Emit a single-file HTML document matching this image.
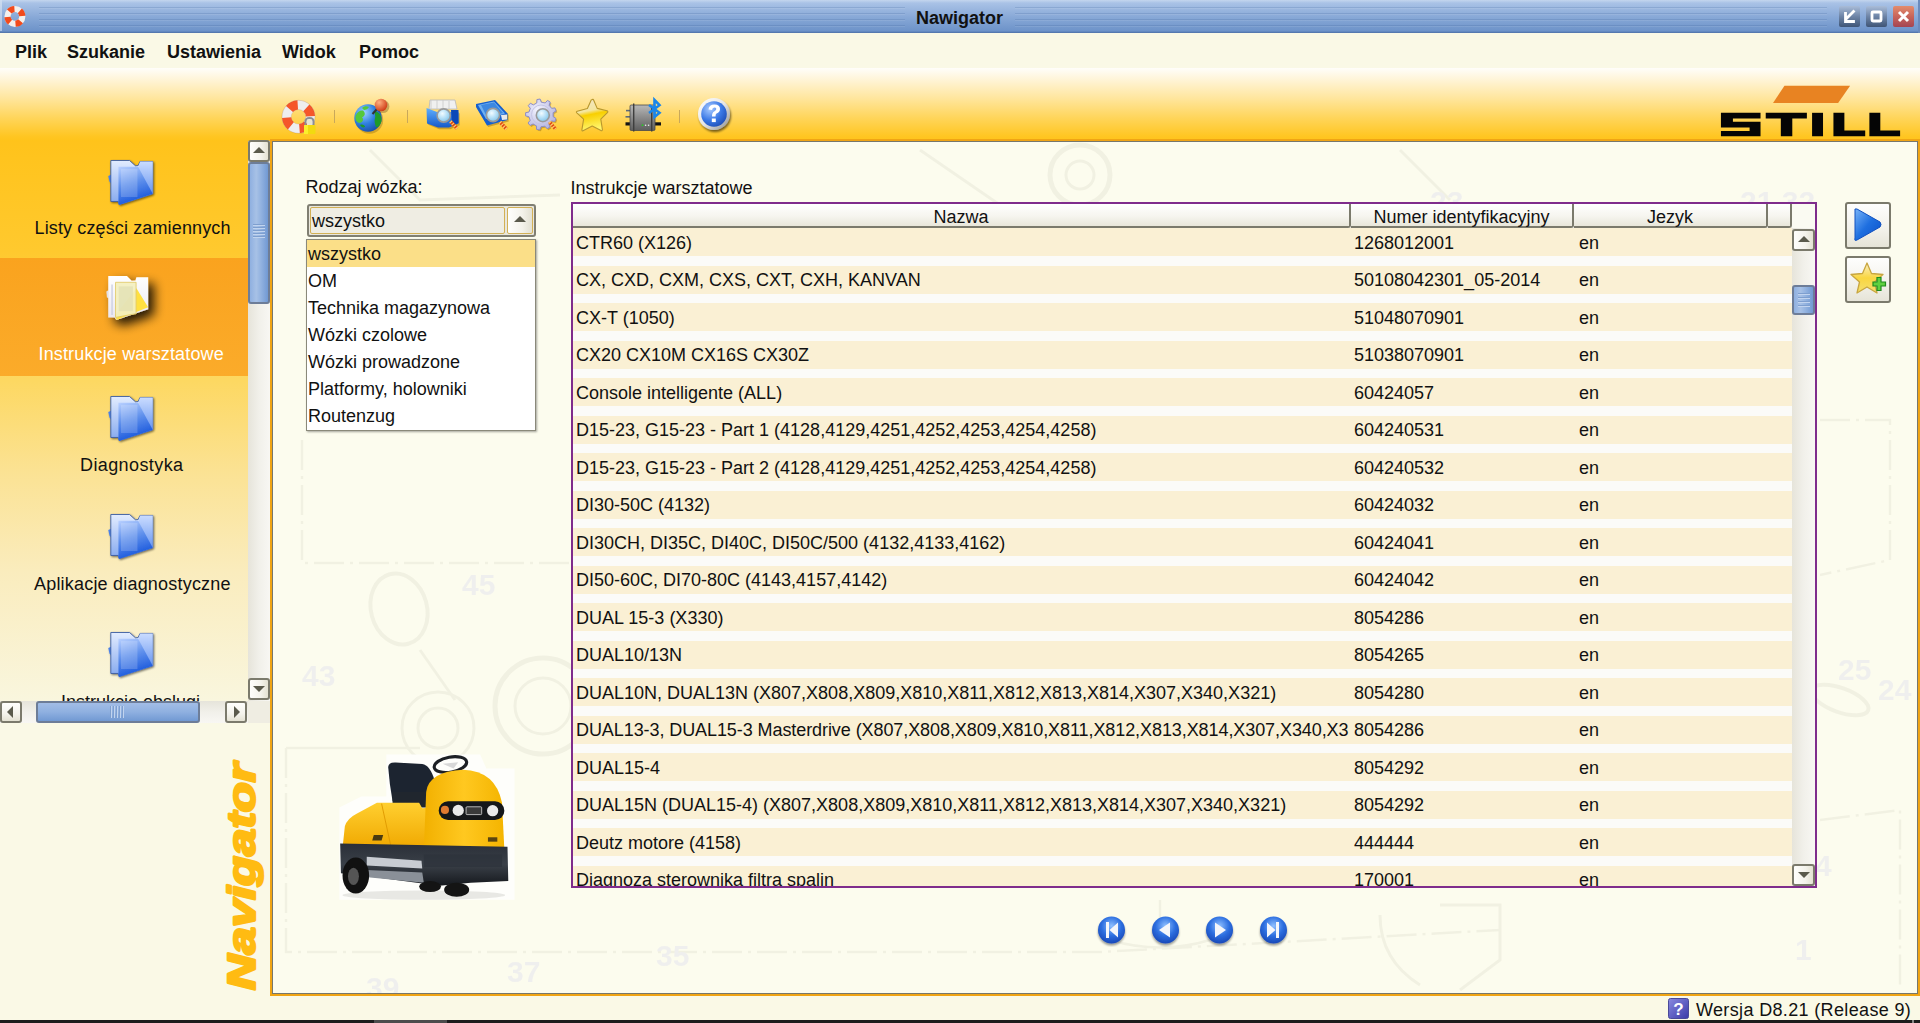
<!DOCTYPE html>
<html><head><meta charset="utf-8">
<style>
*{margin:0;padding:0;box-sizing:border-box}
html,body{width:1920px;height:1023px;overflow:hidden;background:#faf9e6;font-family:"Liberation Sans",sans-serif;font-size:18px;color:#111}
.a{position:absolute}
.t{position:absolute;white-space:pre;line-height:1}
#title{left:0;top:0;width:1920px;height:33px;background:linear-gradient(#c4d6ee 0,#a9c2e6 3px,#86a7d6 18px,#6d93c9 31px,#5a7fb6 32px,#4f72a8 33px)}
#menu{left:0;top:33px;width:1920px;height:35px;background:#faf9e6}

#toolbar{left:0;top:68px;width:1920px;height:73px;background:linear-gradient(#fffefa 0,#fff4d6 12px,#ffe69e 30px,#ffd55a 50px,#ffc623 68px,#ffc31a 73px)}
#sidebar{left:0;top:141px;width:248px;height:560px;background:linear-gradient(#ffc31b 0,#ffc92e 110px,#fdd862 240px,#fbe293 330px,#faecbd 430px,#f9f6de 560px)}
.item{position:absolute;left:0;width:248px;height:118px}
.item .t{width:248px;text-align:center;left:-117px}
#panel{left:270px;top:139px;width:1650px;height:857px;border:2px solid #f0a414}
#pin{left:272px;top:141px;width:1646px;height:853px;border:1px solid #77776b;background:#fcfcee;overflow:hidden}
#status{left:0;top:996px;width:1920px;height:24px;background:#faf9e6}
#black{left:0;top:1020px;width:1920px;height:3px;background:#1c1c1c}
.row{position:absolute;left:0;width:1219px;height:28px;background:#faf0d4}
.row .t{top:7px}
.btn{position:absolute;border:2px solid #7b7a6c;border-radius:3px;background:linear-gradient(90deg,#fefefc,#f4f3ec 60%,#e4e2d3)}
.hd{position:absolute;top:0;height:24px;border-right:2px solid #7b7a6c;border-bottom:2px solid #7b7a6c;border-radius:0 0 3px 0;background:linear-gradient(#ffffff,#f6f5ef 55%,#e8e6da);text-align:center;line-height:24px;padding-top:1px}
.arrow{position:absolute;width:0;height:0}
</style></head><body>

<!-- TITLE BAR -->
<div id="title" class="a">
  <div class="a" style="left:39px;top:7px;width:866px;height:21px;background:repeating-linear-gradient(rgba(60,95,150,0.2) 0 1px,rgba(255,255,255,0.08) 1px 2px,transparent 2px 6px)"></div>
  <div class="a" style="left:1015px;top:7px;width:812px;height:21px;background:repeating-linear-gradient(rgba(60,95,150,0.2) 0 1px,rgba(255,255,255,0.08) 1px 2px,transparent 2px 6px)"></div>
  <svg class="a" style="left:0;top:0" width="32" height="32" viewBox="0 0 32 32">
    <circle cx="14.9" cy="16.4" r="7.4" fill="none" stroke="#f4f0ec" stroke-width="6.2"/>
    <circle cx="14.9" cy="16.4" r="7.4" fill="none" stroke="#f24a1c" stroke-width="6.2" stroke-dasharray="5.81 5.81" stroke-dashoffset="6.5"/>
  </svg>
  <div class="a" style="left:1839px;top:6px;width:21px;height:21px;border-radius:2px;background:linear-gradient(#a9bcd8,#6d84a6 50%,#3f5576)"></div>
  <div class="a" style="left:1866px;top:6px;width:21px;height:21px;border-radius:2px;background:linear-gradient(#a9bcd8,#6d84a6 50%,#3f5576)"></div>
  <div class="a" style="left:1893px;top:6px;width:21px;height:21px;border-radius:2px;background:linear-gradient(#e38c6c,#c8645a 50%,#a44552)"></div>
  <svg class="a" style="left:1839px;top:6px" width="21" height="21" viewBox="0 0 21 21"><path d="M14.5 5.5 L7.5 12.5 M6.5 7.5 V15.5 H14.5" stroke="#fff" stroke-width="2.8" fill="none" stroke-linecap="square"/></svg>
  <svg class="a" style="left:1866px;top:6px" width="21" height="21" viewBox="0 0 21 21"><rect x="6" y="6" width="9" height="9" stroke="#fff" stroke-width="2.8" fill="none" rx="1"/></svg>
  <svg class="a" style="left:1893px;top:6px" width="21" height="21" viewBox="0 0 21 21"><path d="M6 6 L15 15 M15 6 L6 15" stroke="#fff" stroke-width="3" fill="none"/></svg>
  <div class="a" style="left:1918px;top:0;width:2px;height:33px;background:#6b8bbd"></div>
  <div class="a" style="left:0;top:0;width:2px;height:31px;background:linear-gradient(#cddcf0,#a9bfe0)"></div>
</div>
<div class="t" style="left:916px;top:9px;font-weight:bold">Nawigator</div>

<!-- MENU -->
<div id="menu" class="a"></div>
<div class="t" style="left:15px;top:43px;font-weight:bold">Plik</div>
<div class="t" style="left:67px;top:43px;font-weight:bold">Szukanie</div>
<div class="t" style="left:167px;top:43px;font-weight:bold">Ustawienia</div>
<div class="t" style="left:282px;top:43px;font-weight:bold">Widok</div>
<div class="t" style="left:359px;top:43px;font-weight:bold">Pomoc</div>

<!-- TOOLBAR -->
<div id="toolbar" class="a"></div>
<svg class="a" style="left:1710px;top:80px" width="200" height="60" viewBox="0 0 1920 576">
  <path d="M715 55 H1345 L1230 220 H605 Z" fill="#e88322"/>
  <path d="M105 315 H485 V370 H220 V400 H485 V540 H105 V490 H380 V455 H105 Z" fill="#050505"/>
  <path d="M535 315 H930 V370 H790 V540 H680 V370 H535 Z" fill="#050505"/>
  <rect x="980" y="315" width="105" height="225" fill="#050505"/>
  <path d="M1185 315 H1290 V485 H1490 V540 H1185 Z" fill="#050505"/>
  <path d="M1530 315 H1635 V485 H1825 V540 H1530 Z" fill="#050505"/>
</svg>
<defs></defs>
<svg class="a" style="left:0;top:0;width:0;height:0">
  <defs>
    <radialGradient id="glass" cx="0.4" cy="0.35" r="0.7"><stop offset="0" stop-color="#f2fbff"/><stop offset="0.5" stop-color="#b6e0f7"/><stop offset="1" stop-color="#7fc1e6"/></radialGradient>
    <radialGradient id="globe" cx="0.35" cy="0.3" r="0.75"><stop offset="0" stop-color="#9fd3ff"/><stop offset="0.55" stop-color="#2f7fe0"/><stop offset="1" stop-color="#1a4fa8"/></radialGradient>
    <radialGradient id="pinball" cx="0.35" cy="0.3" r="0.7"><stop offset="0" stop-color="#ffb080"/><stop offset="1" stop-color="#d0401a"/></radialGradient>
    <linearGradient id="bluebox" x1="0" y1="0" x2="0" y2="1"><stop offset="0" stop-color="#5fb0ff"/><stop offset="1" stop-color="#1659c8"/></linearGradient>
    <radialGradient id="helpg" cx="0.35" cy="0.3" r="0.75"><stop offset="0" stop-color="#a9cbff"/><stop offset="0.6" stop-color="#3a78e6"/><stop offset="1" stop-color="#2050b8"/></radialGradient>
    <linearGradient id="starg" x1="0" y1="0" x2="0" y2="1"><stop offset="0" stop-color="#fbf0c8"/><stop offset="0.5" stop-color="#f9d640"/><stop offset="1" stop-color="#f4e070"/></linearGradient>
    <linearGradient id="devg" x1="0" y1="0" x2="1" y2="0"><stop offset="0" stop-color="#5a5a5a"/><stop offset="0.4" stop-color="#a8a8a8"/><stop offset="1" stop-color="#6a6a6a"/></linearGradient>
    <radialGradient id="gearg" cx="0.4" cy="0.35" r="0.7"><stop offset="0" stop-color="#f4f4ff"/><stop offset="1" stop-color="#b0b0dc"/></radialGradient>
  </defs>
</svg>
<!-- icon1 lifebuoy+lock -->
<svg class="a" style="left:278px;top:94px" width="42" height="44" viewBox="0 0 42 44">
  <circle cx="20.5" cy="22.8" r="11.9" fill="none" stroke="#eeeeee" stroke-width="9.2"/>
  <circle cx="20.5" cy="22.8" r="11.9" fill="none" stroke="#f5562a" stroke-width="9.2" stroke-dasharray="9.346 9.346" stroke-dashoffset="10.5"/>
  <circle cx="20.5" cy="22.8" r="16.5" fill="none" stroke="rgba(150,90,60,0.35)" stroke-width="0.6"/>
  <circle cx="20.5" cy="22.8" r="7.3" fill="none" stroke="rgba(150,90,60,0.25)" stroke-width="0.6"/>
  <path d="M27.5 31 V27.5 Q27.5 24 31.5 24 Q35.5 24 35.5 27.5 V31" fill="none" stroke="#8a8e96" stroke-width="2"/>
  <rect x="29" y="25.5" width="5" height="6" fill="#e8e4d0"/>
  <rect x="26" y="31" width="11.5" height="9" rx="1" fill="#f2da10"/>
  <rect x="26" y="31" width="4" height="9" fill="#ffff40" opacity="0.6"/>
</svg>
<div class="a" style="left:334px;top:110px;width:1px;height:13px;background:#c9a85a"></div>
<!-- icon2 globe -->
<svg class="a" style="left:352px;top:97px" width="38" height="38" viewBox="0 0 38 38">
  <circle cx="16.5" cy="22" r="13.7" fill="rgba(80,50,0,0.25)" transform="translate(1,1)"/>
  <circle cx="16" cy="21" r="13.7" fill="url(#globe)"/>
  <path d="M3.5 19 C5 15 8 13 11 13.5 C14 16 13 19 10 20.5 C12 22 11 25 8 26 C5 26 3 23 3.5 19 Z" fill="#55c83a"/>
  <path d="M10 11 C12 9 15 9 17 10 C16 12 14 13 12 13 Z" fill="#55c83a"/>
  <path d="M23 14 C27 15 30 19 29.5 24 C28.5 28 26 31 24 30 C23 27 22 24 23 21 C24 19 22 17 23 14 Z" fill="#1e9a2a"/>
  <path d="M8 28 C10 27 13 28 13 30 C11 31 9 30 8 28 Z" fill="#1e9a2a"/>
  <line x1="20.5" y1="17" x2="25" y2="12" stroke="#333" stroke-width="2"/>
  <circle cx="29.8" cy="8.5" r="6.6" fill="rgba(80,40,0,0.3)" transform="translate(1,1)"/>
  <circle cx="29" cy="8" r="6.3" fill="url(#pinball)"/>
</svg>
<div class="a" style="left:407px;top:110px;width:1px;height:13px;background:#c9a85a"></div>
<!-- icon3 box search -->
<svg class="a" style="left:422px;top:94px" width="44" height="44" viewBox="0 0 44 44">
  <path d="M5 15 L15 18 H36.5 V30 L27 34 H16 L5 29.5 Z" fill="rgba(90,60,0,0.3)" transform="translate(1.2,1.2)"/>
  <path d="M8 6 H33 L35 15 H7 Z" fill="#f0f0f0" stroke="#b8b8b8" stroke-width="0.8"/>
  <path d="M9 6 V15 M15 6 V15 M21 6 V15 M27 7 V15" stroke="#c8c8c8" stroke-width="0.8"/>
  <path d="M4.5 14 L15 18 H36.5 V29.5 L27 33.5 H16 L5 29.5 Z" fill="url(#bluebox)"/>
  <path d="M29 16 H36.5 V29 L30 32 Z" fill="#0a48b8"/>
  <line x1="28.5" y1="27.5" x2="35" y2="34.5" stroke="#e04a10" stroke-width="3.4"/>
  <line x1="28.5" y1="27.5" x2="35" y2="34.5" stroke="#ffd070" stroke-width="3.4" stroke-dasharray="1.2 1.6"/>
  <circle cx="21.7" cy="21.5" r="6.6" fill="url(#glass)" stroke="#9a9a9a" stroke-width="1.6"/>
</svg>
<!-- icon4 book search -->
<svg class="a" style="left:472px;top:94px" width="44" height="44" viewBox="0 0 44 44">
  <path d="M4 10 L23 6 L35.5 19.5 V26 L15 31.5 L4 13 Z" fill="rgba(90,60,0,0.3)" transform="translate(1.2,1.4)"/>
  <path d="M4 10 L23 6 L35.5 19.5 V26 L15 31.5 L4 13 Z" fill="#1560d0"/>
  <path d="M6 11 L22 7.5 L33 19.5 L14 25 Z" fill="#6fb0f0"/>
  <path d="M9 11 L22 8.5 L31 19 L15 23 Z" fill="#3d88e0"/>
  <path d="M29 21 L35 20.5 V25.5 L30 26 Z" fill="#e8e8e8"/>
  <line x1="28" y1="28" x2="34.5" y2="35" stroke="#e04a10" stroke-width="3.4"/>
  <line x1="28" y1="28" x2="34.5" y2="35" stroke="#ffd070" stroke-width="3.4" stroke-dasharray="1.2 1.6"/>
  <circle cx="21" cy="21" r="6.6" fill="url(#glass)" stroke="#9a9a9a" stroke-width="1.6"/>
</svg>
<!-- icon5 gear search -->
<svg class="a" style="left:520px;top:94px" width="44" height="44" viewBox="0 0 44 44">
  <path d="M16.78 8.95 L16.92 5.55 L20.12 5.02 L21.33 8.20 L25.20 8.94 L27.49 6.42 L30.27 8.08 L29.16 11.29 L31.65 14.34 L35.02 13.89 L36.09 16.95 L33.17 18.69 L33.12 22.62 L35.99 24.45 L34.84 27.48 L31.48 26.94 L28.92 29.91 L29.95 33.16 L27.12 34.74 L24.89 32.17 L21.01 32.80 L19.72 35.95 L16.53 35.34 L16.48 31.94 L13.10 29.93 L10.09 31.51 L8.04 29.00 L10.19 26.36 L8.89 22.65 L5.57 21.92 L5.61 18.68 L8.95 18.04 L10.34 14.36 L8.26 11.67 L10.38 9.21 L13.35 10.87 Z" fill="rgba(90,60,0,0.3)" transform="translate(1.2,1.4)"/>
  <path d="M16.78 8.95 L16.92 5.55 L20.12 5.02 L21.33 8.20 L25.20 8.94 L27.49 6.42 L30.27 8.08 L29.16 11.29 L31.65 14.34 L35.02 13.89 L36.09 16.95 L33.17 18.69 L33.12 22.62 L35.99 24.45 L34.84 27.48 L31.48 26.94 L28.92 29.91 L29.95 33.16 L27.12 34.74 L24.89 32.17 L21.01 32.80 L19.72 35.95 L16.53 35.34 L16.48 31.94 L13.10 29.93 L10.09 31.51 L8.04 29.00 L10.19 26.36 L8.89 22.65 L5.57 21.92 L5.61 18.68 L8.95 18.04 L10.34 14.36 L8.26 11.67 L10.38 9.21 L13.35 10.87 Z" fill="url(#gearg)" stroke="#8e8ec4" stroke-width="1"/>
  <circle cx="21" cy="20.5" r="9.5" fill="none" stroke="#c4c4e4" stroke-width="1"/>
  <line x1="29.5" y1="28" x2="35.5" y2="35" stroke="#e04a10" stroke-width="3.4"/>
  <line x1="29.5" y1="28" x2="35.5" y2="35" stroke="#ffd070" stroke-width="3.4" stroke-dasharray="1.2 1.6"/>
  <circle cx="22.8" cy="21.2" r="6.5" fill="url(#glass)" stroke="#9a9a9a" stroke-width="1.6"/>
</svg>
<!-- icon6 star + icon7 device -->
<svg class="a" style="left:570px;top:94px" width="96" height="44" viewBox="0 0 96 44">
  <defs>
    <linearGradient id="star2" x1="0" y1="0" x2="0.2" y2="1"><stop offset="0" stop-color="#f2e6c8"/><stop offset="0.42" stop-color="#f4e6a0"/><stop offset="0.55" stop-color="#f8cf00"/><stop offset="1" stop-color="#fff46a"/></linearGradient>
    <linearGradient id="dev2" x1="0" y1="0" x2="0" y2="1"><stop offset="0" stop-color="#b8b8b8"/><stop offset="0.5" stop-color="#8a8a8a"/><stop offset="1" stop-color="#5e5e5e"/></linearGradient>
  </defs>
  <path d="M22.3 5.5 Q23 5 23.6 6 L27.2 14.4 L37 16.8 Q38.5 17.5 37.4 18.6 L30.8 25.2 L32.4 35.5 Q32.4 37 31 36.6 L22.2 32 L13 36.8 Q11.8 37.2 11.9 35.8 L13.6 25.2 L6.8 18.8 Q5.8 17.8 7.2 17.2 L17.4 14.5 L21.2 6 Z" fill="url(#star2)" stroke="#b8982e" stroke-width="1.1" stroke-linejoin="round"/>
  <rect x="55.5" y="28.3" width="35.5" height="3.2" fill="#141414"/>
  <rect x="56" y="15.8" width="4.5" height="1.6" fill="#5c6a7a"/>
  <rect x="55.5" y="22" width="5" height="1.6" fill="#5c6a7a"/>
  <rect x="60" y="11" width="25" height="25.5" rx="1.2" fill="url(#dev2)" stroke="#4a4a4a" stroke-width="0.8"/>
  <rect x="63" y="9.5" width="1.4" height="28" fill="#3e3e3e"/>
  <rect x="81" y="13" width="1.4" height="24.5" fill="#3e3e3e"/>
  <circle cx="72.5" cy="31.2" r="0.9" fill="#22cc22"/><circle cx="75.6" cy="31.2" r="0.8" fill="#eee"/><circle cx="78.6" cy="31.2" r="0.8" fill="#eee"/>
  <path d="M79 11 L89.5 18.8 L84.5 23 V6 L89.5 11.2 L79 19" fill="none" stroke="#1a86ea" stroke-width="2.6" stroke-linejoin="miter"/>
</svg>
<div class="a" style="left:679px;top:110px;width:1px;height:13px;background:#c9a85a"></div>
<!-- icon8 help -->
<svg class="a" style="left:695px;top:96px" width="40" height="40" viewBox="0 0 40 40">
  <defs>
    <linearGradient id="ringg" x1="0" y1="0" x2="1" y2="1"><stop offset="0" stop-color="#ffffff"/><stop offset="0.5" stop-color="#e6e6e6"/><stop offset="1" stop-color="#8e8e8e"/></linearGradient>
    <filter id="hsh" x="-30%" y="-30%" width="160%" height="160%"><feGaussianBlur in="SourceAlpha" stdDeviation="1.3"/><feOffset dx="1.2" dy="1.5"/><feComponentTransfer><feFuncA type="linear" slope="0.55"/></feComponentTransfer><feMerge><feMergeNode/><feMergeNode in="SourceGraphic"/></feMerge></filter>
  </defs>
  <circle cx="19" cy="18" r="16" fill="url(#ringg)" filter="url(#hsh)"/>
  <circle cx="19" cy="18" r="12.8" fill="url(#helpg)"/>
  <path d="M13.5 13.5 Q14 8.5 19.5 8.5 Q25 8.7 25 13 Q25 16 21.5 17.5 Q20.5 18.2 20.5 20.5 H17 Q16.8 16.5 19.5 15.2 Q21.5 14.2 21.3 12.8 Q21 11.5 19.3 11.5 Q17.3 11.6 17 14 Z" fill="#fff"/>
  <rect x="16.8" y="22.5" width="4" height="3.6" fill="#fff"/>
</svg>

<!-- SIDEBAR -->
<svg class="a" style="left:0;top:0;width:0;height:0">
  <defs>
    <linearGradient id="fback" x1="0" y1="0" x2="0" y2="1"><stop offset="0" stop-color="#e2ecff"/><stop offset="1" stop-color="#84a8ee"/></linearGradient>
    <linearGradient id="ffront" x1="0" y1="0" x2="0.3" y2="1"><stop offset="0" stop-color="#b8d0ff"/><stop offset="0.5" stop-color="#5f90ec"/><stop offset="1" stop-color="#1a58dc"/></linearGradient>
    <linearGradient id="fright" x1="0" y1="0" x2="0" y2="1"><stop offset="0" stop-color="#cadcff"/><stop offset="1" stop-color="#4a80ec"/></linearGradient>
    <filter id="fsh" x="-20%" y="-20%" width="140%" height="140%"><feGaussianBlur in="SourceAlpha" stdDeviation="14"/><feOffset dx="8" dy="8"/><feComponentTransfer><feFuncA type="linear" slope="0.55"/></feComponentTransfer><feMerge><feMergeNode/><feMergeNode in="SourceGraphic"/></feMerge></filter>
    <filter id="fsh2" x="-30%" y="-30%" width="170%" height="170%"><feGaussianBlur in="SourceAlpha" stdDeviation="35"/><feOffset dx="40" dy="40"/><feComponentTransfer><feFuncA type="linear" slope="0.9"/></feComponentTransfer><feMerge><feMergeNode/><feMergeNode in="SourceGraphic"/></feMerge></filter>
    <g id="folder">
      <path d="M130 410 L175 390 V520 L150 500 Z" fill="#4a80e8"/>
      <path d="M170 165 H465 L560 250 L600 245 L630 180 H830 V690 L300 860 L290 810 L170 810 Z" fill="url(#fback)" stroke="#3a5aa0" stroke-width="14"/>
      <path d="M630 180 H830 V690 L300 860 L290 810 L610 260 Z" fill="url(#fright)"/>
      <path d="M290 265 H600 L830 690 L300 860 L290 810 Z" fill="url(#ffront)"/>
      <path d="M330 300 H590 V740 H330 Z" fill="#ffffff" fill-opacity="0.18"/>
    </g>
    <linearGradient id="yback" x1="0" y1="0" x2="0" y2="1"><stop offset="0" stop-color="#ffffff"/><stop offset="1" stop-color="#e9e6f0"/></linearGradient>
    <linearGradient id="yfront" x1="0" y1="0" x2="0.3" y2="1"><stop offset="0" stop-color="#fffbe0"/><stop offset="0.5" stop-color="#f6e890"/><stop offset="1" stop-color="#f2d030"/></linearGradient>
  </defs>
</svg>
<div id="sidebar" class="a">
  <div class="a" style="left:0;top:117px;width:248px;height:118px;background:linear-gradient(#faa31e,#fbab2a)"></div>
</div>
<svg class="a" style="left:100px;top:150px" width="70" height="65" viewBox="0 0 1102 1023"><use href="#folder" filter="url(#fsh)"/></svg>
<svg class="a" style="left:88px;top:256px" width="100" height="95" viewBox="-150 -150 1580 1500">
  <defs>
    <filter id="fsh3" x="-50%" y="-50%" width="200%" height="200%"><feGaussianBlur in="SourceAlpha" stdDeviation="80"/><feOffset dx="90" dy="95"/><feComponentTransfer><feFuncA type="linear" slope="0.85"/></feComponentTransfer><feMerge><feMergeNode/><feMergeNode in="SourceGraphic"/></feMerge></filter>
  </defs>
  <g filter="url(#fsh3)">
  <path d="M140 410 L175 390 V520 L150 500 Z" fill="#e0e0e8"/>
  <path d="M170 165 H465 L540 240 L600 235 L615 185 H800 V690 L300 860 L270 820 L170 820 Z" fill="url(#yback)"/>
  <path d="M230 300 V780" stroke="#c8cce0" stroke-width="20"/>
  <path d="M615 360 L800 660 L300 860 L280 780 Z" fill="#ffe040"/>
  <path d="M285 265 H610 V760 L285 820 Z" fill="#f4f0c0" stroke="#e0c860" stroke-width="14" opacity="0.92"/>
  <path d="M335 330 H560 V720 H335 Z" fill="#dcdcb0" opacity="0.6"/>
  </g>
</svg>
<svg class="a" style="left:100px;top:386px" width="70" height="65" viewBox="0 0 1102 1023"><use href="#folder" filter="url(#fsh)"/></svg>
<svg class="a" style="left:100px;top:504px" width="70" height="65" viewBox="0 0 1102 1023"><use href="#folder" filter="url(#fsh)"/></svg>
<svg class="a" style="left:100px;top:622px" width="70" height="65" viewBox="0 0 1102 1023"><use href="#folder" filter="url(#fsh)"/></svg>
<div class="t" style="left:34.5px;top:219px;letter-spacing:0.13px">Listy części zamiennych</div>
<div class="t" style="left:38.5px;top:345px;color:#fff;letter-spacing:0.15px">Instrukcje warsztatowe</div>
<div class="t" style="left:80px;top:456px;letter-spacing:0.4px">Diagnostyka</div>
<div class="t" style="left:34px;top:575px;letter-spacing:0.2px">Aplikacje diagnostyczne</div>
<div class="a" style="left:0;top:690px;width:248px;height:11px;overflow:hidden"><div class="t" style="left:61px;top:3px">Instrukcje obslugi</div></div>

<!-- left vertical scrollbar -->
<div class="a" style="left:248px;top:141px;width:22px;height:560px;background:linear-gradient(90deg,#e6e4da,#f1f0ea 50%,#f8f7f3)"></div>
<div class="btn" style="left:248px;top:140px;width:22px;height:22px"></div>
<div class="a" style="left:253px;top:147px;width:0;height:0;border-left:6px solid transparent;border-right:6px solid transparent;border-bottom:6px solid #5a5a4c"></div>
<div class="a" style="left:248px;top:162px;width:22px;height:142px;border:2px solid #6d7d98;border-radius:3px;background:linear-gradient(90deg,#8fb0e0,#a7c1e6 35%,#93b3e0 60%,#7199d3)"></div>
<div class="a" style="left:253px;top:224px;width:12px;height:14px;background:repeating-linear-gradient(#7e9fcf 0 1px,#c1d4ef 1px 2px,transparent 2px 3px)"></div>
<div class="btn" style="left:248px;top:678px;width:22px;height:22px"></div>
<div class="a" style="left:253px;top:686px;width:0;height:0;border-left:6px solid transparent;border-right:6px solid transparent;border-top:6px solid #5a5a4c"></div>
<!-- left horizontal scrollbar -->
<div class="a" style="left:0;top:701px;width:270px;height:22px;background:linear-gradient(#e6e4da,#f1f0ea 50%,#f8f7f3)"></div>
<div class="a" style="left:248px;top:701px;width:22px;height:22px;background:#efede2"></div>
<div class="btn" style="left:0;top:701px;width:22px;height:22px;background:linear-gradient(#fefefc,#f4f3ec 60%,#e4e2d3)"></div>
<div class="a" style="left:7px;top:706px;width:0;height:0;border-top:6px solid transparent;border-bottom:6px solid transparent;border-right:6px solid #5a5a4c"></div>
<div class="a" style="left:36px;top:701px;width:164px;height:22px;border:2px solid #6d7d98;border-radius:3px;background:linear-gradient(#a2bde6,#8fb0e0 50%,#7199d3)"></div>
<div class="a" style="left:110px;top:706px;width:15px;height:12px;background:repeating-linear-gradient(90deg,#7e9fcf 0 1px,#c1d4ef 1px 2px,transparent 2px 3px)"></div>
<div class="btn" style="left:225px;top:701px;width:22px;height:22px;background:linear-gradient(#fefefc,#f4f3ec 60%,#e4e2d3)"></div>
<div class="a" style="left:234px;top:706px;width:0;height:0;border-top:6px solid transparent;border-bottom:6px solid transparent;border-left:6px solid #5a5a4c"></div>

<!-- Navigator vertical text -->
<svg class="a" style="left:200px;top:740px" width="80" height="260" viewBox="0 0 80 260">
  <text transform="translate(54.5,250) rotate(-90)" font-family="Liberation Sans" font-weight="bold" font-style="italic" font-size="38" fill="#ffbb12" stroke="#ffbb12" stroke-width="2.4" stroke-linejoin="round" textLength="227" lengthAdjust="spacingAndGlyphs">Navigator</text>
</svg>

<!-- PANEL -->
<div id="panel" class="a"></div>
<div id="pin" class="a"></div>

<!-- watermark -->
<svg class="a" style="left:273px;top:142px;opacity:0.6" width="1644" height="851" viewBox="273 142 1644 851">
  <g fill="none" stroke="#ebeadb" stroke-width="2.5">
    <path d="M302 440 V563 H575" stroke-dasharray="30 6 3 6"/>
    <path d="M286 748 V952 H1100 L1500 930" stroke-dasharray="30 6 3 6"/>
    <path d="M286 748 H420" />
    <ellipse cx="399" cy="609" rx="28" ry="36" transform="rotate(-15 399 609)" stroke-width="4"/>
    <path d="M420 650 L455 700" stroke-width="3"/>
    <circle cx="438" cy="728" r="36" stroke-width="3"/>
    <circle cx="438" cy="728" r="20" stroke-width="3"/>
    <circle cx="543" cy="706" r="48" stroke-width="5"/>
    <circle cx="543" cy="706" r="28" stroke-width="3"/>
    <path d="M370 150 L420 200 L560 195" stroke-width="3"/>
    <circle cx="1080" cy="175" r="30" stroke-width="5"/>
    <circle cx="1080" cy="175" r="14" stroke-width="3"/>
    <path d="M920 150 L1000 205" stroke-width="3"/>
    <path d="M1400 150 L1450 200" stroke-width="3"/>
    <path d="M1820 420 H1890 V560 L1820 575" stroke-dasharray="30 6 3 6"/>
    <path d="M1820 820 L1900 810 V990" stroke-dasharray="30 6 3 6"/>
    <path d="M1660 880 Q1700 830 1810 820" stroke-width="3"/>
    <ellipse cx="1840" cy="700" rx="30" ry="12" transform="rotate(20 1840 700)" stroke-width="4"/>
    <path d="M1380 915 Q1380 960 1420 985 M1440 905 H1500 V960 L1460 990" stroke-width="3"/>
    <path d="M1160 900 V940 M1110 940 Q1160 955 1210 940" stroke-width="2.5"/>
  </g>
  <g font-family="Liberation Sans" font-weight="bold" font-size="30" fill="#e8e8ee">
    <text x="462" y="595">45</text>
    <text x="302" y="686">43</text>
    <text x="507" y="982">37</text>
    <text x="656" y="966">35</text>
    <text x="366" y="998">39</text>
    <text x="1740" y="212">21 32</text>
    <text x="1430" y="212">23</text>
    <text x="1838" y="680">25</text>
    <text x="1878" y="700">24</text>
    <text x="1815" y="876">4</text>
    <text x="1795" y="960">1</text>
  </g>
</svg>

<!-- labels -->
<div class="t" style="left:305.5px;top:178px">Rodzaj wózka:</div>
<div class="t" style="left:570.5px;top:179px">Instrukcje warsztatowe</div>

<!-- table -->
<div class="a" style="left:571px;top:202px;width:246px;height:686px;"></div>
<div class="a" style="left:571px;top:202px;width:1246px;height:686px;border:2px solid #7f2c8c;background:#fbfbf8;overflow:hidden">
  <div class="a" style="left:0;top:0;width:1242px;height:24px;background:#fafaf2"></div>
  <div class="hd" style="left:0;width:778px">Nazwa</div>
  <div class="hd" style="left:778px;width:223px">Numer identyfikacyjny</div>
  <div class="hd" style="left:1001px;width:194px">Jezyk</div>
  <div class="hd" style="left:1195px;width:24px"></div>
  <div class="a" style="left:0;top:24px;width:1219px;height:660px;overflow:hidden">
<div class="row" style="top:0px"></div>
<div class="t" style="left:3px;top:5.5px">CTR60 (X126)</div>
<div class="t" style="left:781px;top:5.5px">1268012001</div>
<div class="t" style="left:1006px;top:5.5px">en</div>
<div class="row" style="top:37.5px"></div>
<div class="t" style="left:3px;top:43px">CX, CXD, CXM, CXS, CXT, CXH, KANVAN</div>
<div class="t" style="left:781px;top:43px">50108042301_05-2014</div>
<div class="t" style="left:1006px;top:43px">en</div>
<div class="row" style="top:75px"></div>
<div class="t" style="left:3px;top:80.5px">CX-T (1050)</div>
<div class="t" style="left:781px;top:80.5px">51048070901</div>
<div class="t" style="left:1006px;top:80.5px">en</div>
<div class="row" style="top:112.5px"></div>
<div class="t" style="left:3px;top:118px">CX20 CX10M CX16S CX30Z</div>
<div class="t" style="left:781px;top:118px">51038070901</div>
<div class="t" style="left:1006px;top:118px">en</div>
<div class="row" style="top:150px"></div>
<div class="t" style="left:3px;top:155.5px">Console intelligente (ALL)</div>
<div class="t" style="left:781px;top:155.5px">60424057</div>
<div class="t" style="left:1006px;top:155.5px">en</div>
<div class="row" style="top:187.5px"></div>
<div class="t" style="left:3px;top:193px">D15-23, G15-23 - Part 1 (4128,4129,4251,4252,4253,4254,4258)</div>
<div class="t" style="left:781px;top:193px">604240531</div>
<div class="t" style="left:1006px;top:193px">en</div>
<div class="row" style="top:225px"></div>
<div class="t" style="left:3px;top:230.5px">D15-23, G15-23 - Part 2 (4128,4129,4251,4252,4253,4254,4258)</div>
<div class="t" style="left:781px;top:230.5px">604240532</div>
<div class="t" style="left:1006px;top:230.5px">en</div>
<div class="row" style="top:262.5px"></div>
<div class="t" style="left:3px;top:268px">DI30-50C (4132)</div>
<div class="t" style="left:781px;top:268px">60424032</div>
<div class="t" style="left:1006px;top:268px">en</div>
<div class="row" style="top:300px"></div>
<div class="t" style="left:3px;top:305.5px">DI30CH, DI35C, DI40C, DI50C/500 (4132,4133,4162)</div>
<div class="t" style="left:781px;top:305.5px">60424041</div>
<div class="t" style="left:1006px;top:305.5px">en</div>
<div class="row" style="top:337.5px"></div>
<div class="t" style="left:3px;top:343px">DI50-60C, DI70-80C (4143,4157,4142)</div>
<div class="t" style="left:781px;top:343px">60424042</div>
<div class="t" style="left:1006px;top:343px">en</div>
<div class="row" style="top:375px"></div>
<div class="t" style="left:3px;top:380.5px">DUAL 15-3 (X330)</div>
<div class="t" style="left:781px;top:380.5px">8054286</div>
<div class="t" style="left:1006px;top:380.5px">en</div>
<div class="row" style="top:412.5px"></div>
<div class="t" style="left:3px;top:418px">DUAL10/13N</div>
<div class="t" style="left:781px;top:418px">8054265</div>
<div class="t" style="left:1006px;top:418px">en</div>
<div class="row" style="top:450px"></div>
<div class="t" style="left:3px;top:455.5px">DUAL10N, DUAL13N (X807,X808,X809,X810,X811,X812,X813,X814,X307,X340,X321)</div>
<div class="t" style="left:781px;top:455.5px">8054280</div>
<div class="t" style="left:1006px;top:455.5px">en</div>
<div class="row" style="top:487.5px"></div>
<div class="t" style="left:3px;top:493px;letter-spacing:-0.08px">DUAL13-3, DUAL15-3 Masterdrive (X807,X808,X809,X810,X811,X812,X813,X814,X307,X340,X3</div>
<div class="t" style="left:781px;top:493px">8054286</div>
<div class="t" style="left:1006px;top:493px">en</div>
<div class="row" style="top:525px"></div>
<div class="t" style="left:3px;top:530.5px">DUAL15-4</div>
<div class="t" style="left:781px;top:530.5px">8054292</div>
<div class="t" style="left:1006px;top:530.5px">en</div>
<div class="row" style="top:562.5px"></div>
<div class="t" style="left:3px;top:568px">DUAL15N (DUAL15-4) (X807,X808,X809,X810,X811,X812,X813,X814,X307,X340,X321)</div>
<div class="t" style="left:781px;top:568px">8054292</div>
<div class="t" style="left:1006px;top:568px">en</div>
<div class="row" style="top:600px"></div>
<div class="t" style="left:3px;top:605.5px">Deutz motore (4158)</div>
<div class="t" style="left:781px;top:605.5px">444444</div>
<div class="t" style="left:1006px;top:605.5px">en</div>
<div class="row" style="top:637.5px"></div>
<div class="t" style="left:3px;top:643px">Diagnoza sterownika filtra spalin</div>
<div class="t" style="left:781px;top:643px">170001</div>
<div class="t" style="left:1006px;top:643px">en</div>
  </div>
  <!-- table scrollbar -->
  <div class="a" style="left:1219px;top:24px;width:23px;height:660px;background:linear-gradient(90deg,#e6e4da,#f1f0ea 50%,#f8f7f3)"></div>
  <div class="btn" style="left:1219px;top:25px;width:23px;height:22px"></div>
  <div class="a" style="left:1224.5px;top:32px;width:0;height:0;border-left:6px solid transparent;border-right:6px solid transparent;border-bottom:6px solid #5a5a4c"></div>
  <div class="a" style="left:1219px;top:81px;width:23px;height:30px;border:2px solid #6d7d98;border-radius:3px;background:linear-gradient(90deg,#8fb0e0,#a7c1e6 35%,#93b3e0 60%,#7199d3)"></div>
  <div class="a" style="left:1225px;top:89px;width:12px;height:14px;background:repeating-linear-gradient(#7e9fcf 0 1px,#c1d4ef 1px 2px,transparent 2px 4px)"></div>
  <div class="btn" style="left:1219px;top:660px;width:23px;height:22px"></div>
  <div class="a" style="left:1224.5px;top:668px;width:0;height:0;border-left:6px solid transparent;border-right:6px solid transparent;border-top:6px solid #5a5a4c"></div>
</div>

<!-- combobox -->
<div class="a" style="left:307px;top:204px;width:229px;height:33px;border:2px solid #807f72;border-radius:3px;background:#e9e7dc"></div>
<div class="a" style="left:310px;top:207px;width:195px;height:27px;border:1px solid #d2b055;border-radius:2px;background:#efede3"></div>
<div class="t" style="left:312px;top:212px">wszystko</div>
<div class="a" style="left:507px;top:207px;width:26px;height:27px;border:1px solid #d2b055;border-radius:2px;background:linear-gradient(90deg,#fefefc,#f3f2ea 60%,#e2e0d2)"></div>
<div class="a" style="left:514px;top:216px;width:0;height:0;border-left:6px solid transparent;border-right:6px solid transparent;border-bottom:6px solid #5a5a4c"></div>

<!-- dropdown list -->
<div class="a" style="left:306px;top:239px;width:230px;height:192px;border:1px solid #8a897a;background:#fff;box-shadow:1px 1px 2px rgba(0,0,0,0.35)"></div>
<div class="a" style="left:307px;top:240px;width:228px;height:27px;background:#fbdf88"></div>
<div class="t" style="left:308px;top:245px">wszystko</div>
<div class="t" style="left:308px;top:272px">OM</div>
<div class="t" style="left:308px;top:299px">Technika magazynowa</div>
<div class="t" style="left:308px;top:326px">Wózki czolowe</div>
<div class="t" style="left:308px;top:353px">Wózki prowadzone</div>
<div class="t" style="left:308px;top:380px">Platformy, holowniki</div>
<div class="t" style="left:308px;top:407px">Routenzug</div>

<!-- right side buttons -->
<div class="btn" style="left:1845px;top:202px;width:46px;height:47px;background:linear-gradient(#fefefd,#f2f1ea 60%,#e6e4d8)"></div>
<svg class="a" style="left:1845px;top:202px" width="46" height="47" viewBox="0 0 46 47">
  <defs><linearGradient id="playg" x1="0" y1="0" x2="1" y2="1"><stop offset="0" stop-color="#7ab4f8"/><stop offset="0.5" stop-color="#1e6fe0"/><stop offset="1" stop-color="#0a50c8"/></linearGradient></defs>
  <path d="M10 9 Q9 6 12 7 L35 20 Q37 22.5 35 25 L12 38 Q9 39.5 10 36 Z" fill="url(#playg)" stroke="#1050c0" stroke-width="1"/>
</svg>
<div class="btn" style="left:1845px;top:256px;width:46px;height:47px;background:linear-gradient(#fefefd,#f2f1ea 60%,#e6e4d8)"></div>
<svg class="a" style="left:1845px;top:256px" width="46" height="47" viewBox="0 0 46 47">
  <path d="M22 7 L26.5 17.5 L38 18.5 L29.5 26 L32 37 L22 31 L12 37 L14.5 26 L6 18.5 L17.5 17.5 Z" fill="url(#starg)" stroke="#c8a640" stroke-width="1.3" stroke-linejoin="round"/>
  <path d="M28 26 H32 V21.5 H36 V26 H40.5 V30 H36 V34.5 H32 V30 H28 Z" fill="#5fd040" stroke="#1f8a1f" stroke-width="1.2"/>
</svg>

<!-- navigation buttons -->
<svg class="a" style="left:1090px;top:910px" width="210" height="42" viewBox="0 0 210 42">
  <defs>
    <radialGradient id="navg" cx="0.5" cy="0.35" r="0.65"><stop offset="0" stop-color="#8fc0ff"/><stop offset="0.55" stop-color="#2d6fe0"/><stop offset="1" stop-color="#1848b8"/></radialGradient>
    <filter id="navsh"><feGaussianBlur in="SourceAlpha" stdDeviation="1.2"/><feOffset dx="0" dy="1.5"/><feComponentTransfer><feFuncA type="linear" slope="0.4"/></feComponentTransfer><feMerge><feMergeNode/><feMergeNode in="SourceGraphic"/></feMerge></filter>
  </defs>
  <g filter="url(#navsh)">
  <circle cx="21.5" cy="20" r="13.5" fill="url(#navg)"/>
  <circle cx="75.5" cy="20" r="13.5" fill="url(#navg)"/>
  <circle cx="129.5" cy="20" r="13.5" fill="url(#navg)"/>
  <circle cx="183.5" cy="20" r="13.5" fill="url(#navg)"/>
  </g>
  <path d="M16 12 H19 V28 H16 Z M19.5 20 L28 12.5 V27.5 Z" fill="#f4f6fa"/>
  <path d="M69 20 L80 12.5 V27.5 Z" fill="#f4f6fa"/>
  <path d="M136 20 L125 12.5 V27.5 Z" fill="#f4f6fa"/>
  <path d="M189 12 H186 V28 H189 Z M185.5 20 L177 12.5 V27.5 Z" fill="#f4f6fa"/>
</svg>

<!-- truck -->
<svg class="a" style="left:330px;top:745px" width="190" height="160" viewBox="0 0 1215 1023">
  <defs>
    <linearGradient id="ty1" x1="0" y1="0" x2="0" y2="1"><stop offset="0" stop-color="#ffcf30"/><stop offset="1" stop-color="#f0a800"/></linearGradient>
    <linearGradient id="ty2" x1="0" y1="0" x2="1" y2="0"><stop offset="0" stop-color="#f2b000"/><stop offset="0.5" stop-color="#ffc820"/><stop offset="1" stop-color="#f4b400"/></linearGradient>
    <linearGradient id="tb" x1="0" y1="0" x2="0" y2="1"><stop offset="0" stop-color="#2a2f38"/><stop offset="0.5" stop-color="#3a4048"/><stop offset="1" stop-color="#15181d"/></linearGradient>
  </defs>
  <path d="M60 400 L200 330 L360 330 L360 60 L960 60 L1000 150 L1180 150 L1180 990 L60 990 Z" fill="#fefefb"/>
  <ellipse cx="600" cy="960" rx="520" ry="30" fill="#e8e8e4"/>
  <!-- seat -->
  <path d="M372 140 Q375 110 420 112 L590 122 Q640 128 670 230 L650 350 L400 360 Q380 250 372 140 Z" fill="#1c2430"/>
  <path d="M400 300 H640 V400 H400 Z" fill="#20262e"/>
  <!-- wheel -->
  <ellipse cx="770" cy="125" rx="105" ry="48" fill="none" stroke="#1c1f24" stroke-width="20" transform="rotate(-10 770 125)"/>
  <path d="M720 120 L820 110 L790 150 Z" fill="#d8d8d8"/>
  <!-- rear body -->
  <path d="M95 520 Q110 470 170 440 L300 370 L570 370 L590 405 L640 400 L640 660 L80 660 Z" fill="url(#ty1)"/>
  <path d="M330 375 L390 650" stroke="#e09a00" stroke-width="6"/>
  <!-- front hood -->
  <path d="M615 300 Q630 170 850 158 Q1060 165 1100 370 L1115 670 L600 670 Z" fill="url(#ty2)"/>
  <!-- headlight band -->
  <rect x="695" y="360" width="420" height="120" rx="60" fill="#15171a"/>
  <circle cx="735" cy="415" r="26" fill="#e07a30"/>
  <circle cx="820" cy="418" r="36" fill="#eaeaea"/>
  <circle cx="1040" cy="420" r="36" fill="#eaeaea"/>
  <rect x="870" y="395" width="100" height="50" rx="6" fill="#3a3a3a" stroke="#ddd" stroke-width="5"/>
  <path d="M280 575 L340 575 L330 610 L270 610Z" fill="#4a3a10"/>
  <rect x="1010" y="590" width="60" height="28" fill="#5a4510"/>
  <!-- chassis -->
  <path d="M65 630 L1135 650 L1140 870 L900 880 L700 900 L240 840 L70 820 Z" fill="url(#tb)"/>
  <path d="M235 715 L585 740 L590 790 L235 770 Z" fill="#c8ccd2"/>
  <path d="M235 800 L590 815 L600 880 L240 845 Z" fill="#8a9098"/>
  <path d="M600 700 L1100 700 L1100 780 L600 780 Z" fill="#2c323a" opacity="0.7"/>
  <!-- wheels -->
  <ellipse cx="165" cy="835" rx="85" ry="115" fill="#111"/>
  <ellipse cx="150" cy="840" rx="35" ry="55" fill="#555"/>
  <ellipse cx="640" cy="905" rx="70" ry="35" fill="#141414"/>
  <ellipse cx="810" cy="925" rx="80" ry="45" fill="#141414"/>
</svg>



<!-- STATUS -->
<div id="status" class="a"></div>
<div class="t" style="left:1696px;top:1001px;letter-spacing:0.35px">Wersja D8.21 (Release 9)</div>
<!-- status help icon -->
<svg class="a" style="left:1668px;top:998px" width="21" height="21" viewBox="0 0 21 21">
  <defs><linearGradient id="sqg" x1="0" y1="0" x2="1" y2="1"><stop offset="0" stop-color="#8a8ae0"/><stop offset="1" stop-color="#3a3aa8"/></linearGradient></defs>
  <rect x="0.5" y="0.5" width="20" height="20" rx="2" fill="url(#sqg)" stroke="#4a4a9a"/>
  <text x="10.5" y="17" text-anchor="middle" font-family="Liberation Sans" font-weight="bold" font-size="17" fill="#fff">?</text>
</svg>
<div id="black" class="a"></div>
<div class="a" style="left:374px;top:1020px;width:73px;height:3px;background:#4c4c4c"></div>
<div class="a" style="left:1912px;top:1020px;width:2px;height:3px;background:#888"></div>

</body></html>
